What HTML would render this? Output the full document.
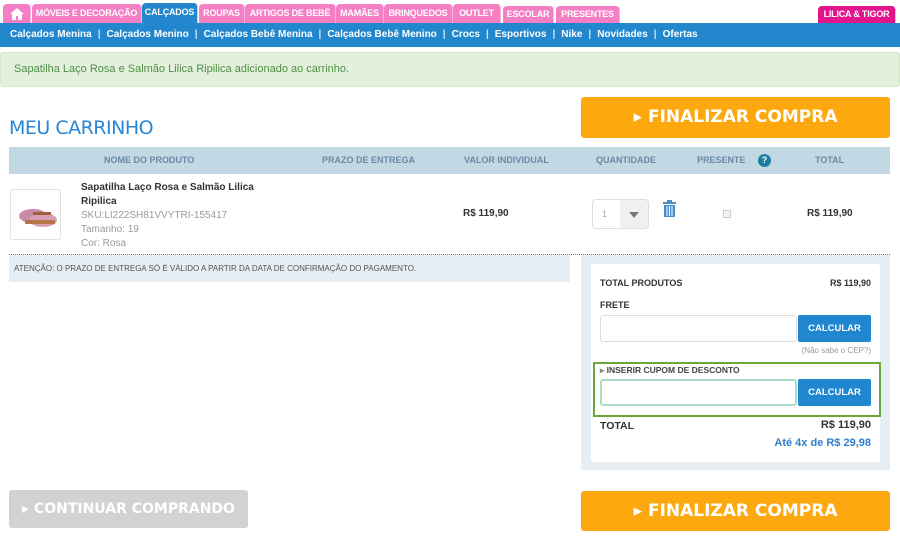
<!DOCTYPE html><html><head><meta charset="utf-8"><style>
*{margin:0;padding:0;box-sizing:border-box}
body{width:900px;height:542px;background:#fff;font-family:"Liberation Sans",Arial,sans-serif;position:relative;overflow:hidden}
.a{position:absolute}
.tab{position:absolute;top:4px;height:19px;background:#f57fc4;color:#fff;font-size:9px;font-weight:bold;line-height:19px;text-align:center;border-radius:4px 4px 0 0;border-right:1px solid #f9b3dc;white-space:nowrap;overflow:hidden;letter-spacing:-0.2px}
.sub{position:absolute;top:23px;left:0;width:900px;height:24px;background:#2287cc;color:#fff;font-size:10px;font-weight:bold;line-height:24px;padding-left:10px;white-space:nowrap}
.sub span.s{color:#cfe6f6;margin:0 6px}
.th{position:absolute;top:155px;font-size:9px;font-weight:bold;color:#6a8aa3}
.btn{position:absolute;border-radius:3px;color:#fff;font-weight:bold;text-align:center;font-family:"DejaVu Sans",sans-serif}
.calc{position:absolute;left:798px;width:73px;height:27px;background:#1f86cf;color:#fff;font-size:9.5px;font-weight:bold;text-align:center;line-height:27px;border-radius:2px}
.inp{position:absolute;left:600px;width:197px;height:27px;border:1px solid #ddd;border-radius:3px;background:#fff}
.r{position:absolute;right:29px;text-align:right;font-weight:bold;color:#333}
</style></head><body>
<div class="tab" style="left:3px;width:28px;top:4px"><svg width="14" height="12" viewBox="0 0 14 12" style="margin-top:4px"><path d="M7 0L0 6h2v6h4V8h2v4h4V6h2z" fill="#fff"/></svg></div>
<div class="tab" style="left:32px;width:110px">MÓVEIS E DECORAÇÃO</div>
<div class="tab" style="left:142px;width:56px;background:#2287cc;top:3px;height:20px">CALÇADOS</div>
<div class="tab" style="left:199px;width:46px">ROUPAS</div>
<div class="tab" style="left:245px;width:91px">ARTIGOS DE BEBÊ</div>
<div class="tab" style="left:336px;width:48px">MAMÃES</div>
<div class="tab" style="left:384px;width:69px">BRINQUEDOS</div>
<div class="tab" style="left:453px;width:48px">OUTLET</div>
<div class="tab" style="left:503px;width:51px;top:6px;height:17px;line-height:17px">ESCOLAR</div>
<div class="tab" style="left:556px;width:64px;top:6px;height:17px;line-height:17px">PRESENTES</div>
<div class="tab" style="left:818px;width:78px;background:#e3158d;top:6px;height:17px;line-height:17px">LILICA &amp; TIGOR</div>
<div class="sub">Calçados Menina<span class="s">|</span>Calçados Menino<span class="s">|</span>Calçados Bebê Menina<span class="s">|</span>Calçados Bebê Menino<span class="s">|</span>Crocs<span class="s">|</span>Esportivos<span class="s">|</span>Nike<span class="s">|</span>Novidades<span class="s">|</span>Ofertas</div>
<div class="a" style="left:0;top:52px;width:900px;height:35px;background:#e3f0dc;border:1px solid #d3e6c7;border-radius:3px;color:#4f8f45;font-size:11px;line-height:33px;padding-left:13px">Sapatilha Laço Rosa e Salmão Lilica Ripilica adicionado ao carrinho.</div>
<div class="a" style="left:9px;top:117px;font-family:'DejaVu Sans',sans-serif;font-size:19px;color:#2a86d4;letter-spacing:-0.5px">MEU CARRINHO</div>
<div class="btn" style="left:581px;top:97px;width:309px;height:41px;background:#fda80f;font-size:17px;line-height:41px">▸ FINALIZAR COMPRA</div>
<div class="a" style="left:9px;top:147px;width:881px;height:27px;background:#c3d8e5"></div>
<div class="th" style="left:104px">NOME DO PRODUTO</div>
<div class="th" style="left:322px">PRAZO DE ENTREGA</div>
<div class="th" style="left:464px">VALOR INDIVIDUAL</div>
<div class="th" style="left:596px">QUANTIDADE</div>
<div class="th" style="left:697px">PRESENTE</div>
<div class="a" style="left:758px;top:154px;width:13px;height:13px;border-radius:50%;background:#1a7fa0;color:#fff;font-size:9px;font-weight:bold;text-align:center;line-height:13px">?</div>
<div class="th" style="left:815px">TOTAL</div>
<div class="a" style="left:10px;top:189px;width:51px;height:51px;border:1px solid #e2e2e2;border-radius:3px;background:#fff;overflow:hidden"><svg width="51" height="51"><ellipse cx="22" cy="26" rx="14" ry="7" fill="#c98aa8"/><ellipse cx="32" cy="30" rx="14" ry="7" fill="#d79fb8"/><rect x="14" y="30" width="30" height="4" fill="#b5764c"/><rect x="22" y="22" width="18" height="3" fill="#a06038"/></svg></div>
<div class="a" style="left:81px;top:181px;font-size:10px;font-weight:bold;color:#333;line-height:14px;width:200px">Sapatilha Laço Rosa e Salmão Lilica Ripilica</div>
<div class="a" style="left:81px;top:209px;font-size:10px;color:#999;line-height:14px">SKU:LI222SH81VVYTRI-155417<br>Tamanho: 19<br>Cor: Rosa</div>
<div class="a" style="left:463px;top:208px;font-size:10px;font-weight:bold;color:#333">R$ 119,90</div>
<div class="a" style="left:592px;top:199px;width:57px;height:30px;border:1px solid #ddd;border-radius:4px;background:linear-gradient(90deg,#fff 0 27px,#f0f0f0 27px);font-size:9px;color:#aaa;padding:9px 0 0 9px">1<span style="position:absolute;left:36px;top:12px;border:5px solid transparent;border-top:6px solid #777"></span></div>
<svg class="a" style="left:663px;top:200px" width="13" height="17" viewBox="0 0 13 17"><rect x="0" y="2" width="13" height="2" fill="#4a8cc6"/><rect x="4" y="0" width="5" height="2" fill="#4a8cc6"/><path d="M1 5h11v12H1z" fill="#4a8cc6"/><path d="M4 6v10M6.5 6v10M9 6v10" stroke="#fff" stroke-width="1"/></svg>
<div class="a" style="left:723px;top:210px;width:8px;height:8px;border:1px solid #ccc;background:#f2f2f2"></div>
<div class="a" style="left:807px;top:208px;font-size:10px;font-weight:bold;color:#333">R$ 119,90</div>
<div class="a" style="left:9px;top:254px;width:881px;border-top:1px dotted #777"></div>
<div class="a" style="left:9px;top:255px;width:561px;height:27px;background:#e6edf3;font-size:8px;color:#555;padding:9px 0 0 5px">ATENÇÃO: O PRAZO DE ENTREGA SÓ É VÁLIDO A PARTIR DA DATA DE CONFIRMAÇÃO DO PAGAMENTO.</div>
<div class="a" style="left:581px;top:255px;width:309px;height:215px;background:#e6edf3"></div>
<div class="a" style="left:591px;top:264px;width:289px;height:198px;background:#fff;border-radius:3px"></div>
<div class="a" style="left:600px;top:278px;font-size:9px;font-weight:bold;color:#333">TOTAL PRODUTOS</div>
<div class="r" style="top:278px;font-size:9px">R$ 119,90</div>
<div class="a" style="left:600px;top:300px;font-size:9px;font-weight:bold;color:#333">FRETE</div>
<div class="inp" style="top:315px"></div>
<div class="calc" style="top:315px">CALCULAR</div>
<div class="a" style="right:29px;top:346px;font-size:8px;color:#999">(Não sabe o CEP?)</div>
<div class="a" style="left:593px;top:362px;width:288px;height:55px;border:2px solid #6aa83a"></div>
<div class="a" style="left:600px;top:365px;font-size:8.5px;font-weight:bold;color:#444"><span style="color:#888">▸</span> INSERIR CUPOM DE DESCONTO</div>
<div class="inp" style="top:379px;border:2px solid #a9dccb"></div>
<div class="calc" style="top:379px">CALCULAR</div>
<div class="a" style="left:600px;top:420px;font-size:10.5px;font-weight:bold;color:#333">TOTAL</div>
<div class="r" style="top:419px;font-size:11px">R$ 119,90</div>
<div class="r" style="top:437px;font-size:11px;color:#2d7fd0">Até 4x de R$ 29,98</div>
<div class="btn" style="left:9px;top:490px;width:239px;height:38px;background:#d2d2d2;font-size:14px;line-height:38px">▸ CONTINUAR COMPRANDO</div>
<div class="btn" style="left:581px;top:491px;width:309px;height:40px;background:#fda80f;font-size:17px;line-height:40px">▸ FINALIZAR COMPRA</div>
</body></html>
